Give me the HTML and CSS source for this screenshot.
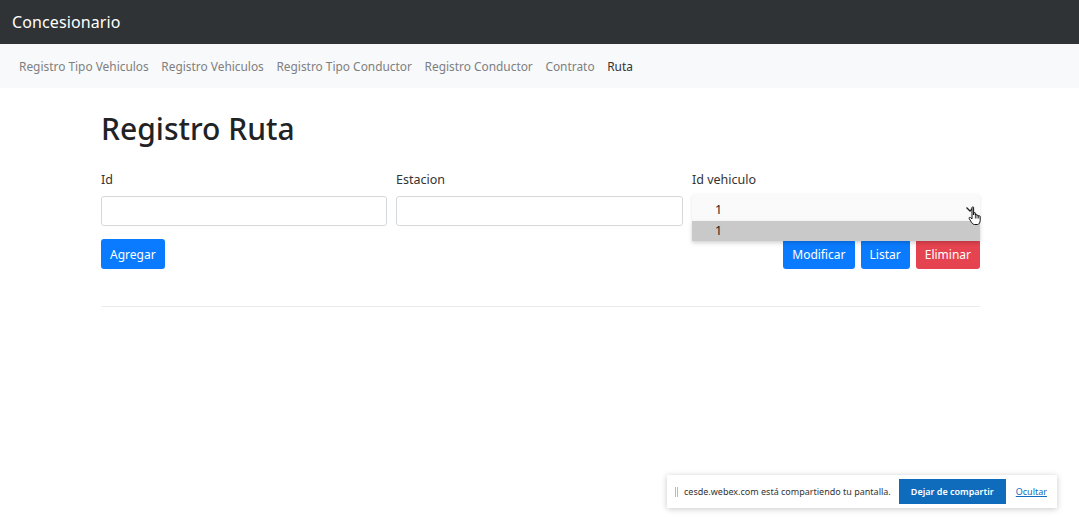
FILE: index.html
```html
<!DOCTYPE html>
<html lang="es">
<head>
<meta charset="utf-8">
<title>Concesionario</title>
<link rel="stylesheet" href="styles.css">
</head>
<body>
<header class="topbar"><span class="brand">Concesionario</span></header>
<nav class="subnav">
  <a class="navlink">Registro Tipo Vehiculos</a>
  <a class="navlink">Registro Vehiculos</a>
  <a class="navlink">Registro Tipo Conductor</a>
  <a class="navlink">Registro Conductor</a>
  <a class="navlink">Contrato</a>
  <a class="navlink active">Ruta</a>
</nav>
<main class="container">
  <h1 class="title">Registro Ruta</h1>
  <div class="fields">
    <div class="field">
      <label class="label">Id</label>
      <div class="input"></div>
    </div>
    <div class="field">
      <label class="label">Estacion</label>
      <div class="input"></div>
    </div>
    <div class="field">
      <label class="label">Id vehiculo</label>
      <div class="select-wrap">
        <div class="select">
          <span class="select-value">1</span>
          <svg class="chevron" width="10" height="7" viewBox="0 0 10 7"><path d="M1.5 1.5 L5 5 L8.5 1.5" fill="none" stroke="#222" stroke-width="1.3"/></svg>
        </div>
        <div class="options"><div class="option">1</div></div>
        <svg class="cursor" width="14" height="20" viewBox="0 0 14 20"><path d="M4 1.5 C4 0.6 5.6 0.6 5.6 1.5 L5.6 9 L5.8 7.2 C5.8 6.3 7.4 6.3 7.4 7.2 L7.4 9 C7.4 8.1 9 8.1 9 9 L9 9.8 C9 9 10.6 9 10.6 9.9 L10.6 10.4 C10.6 9.6 12.2 9.6 12.2 10.5 L12.2 14.5 C12.2 16.5 11 18.5 9.5 18.5 L6.5 18.5 C5 18.5 4.2 17.3 3.2 15.8 L1.2 12.6 C0.6 11.7 1.8 10.8 2.6 11.6 L4 13 Z" fill="#fff" stroke="#111" stroke-width="1" stroke-linejoin="round"/><path d="M7.4 9 L7.4 12.5 M9 9.8 L9 12.5 M10.6 10.4 L10.6 12.5" stroke="#111" stroke-width="0.8"/></svg>
      </div>
    </div>
  </div>
  <div class="actions">
    <button class="btn btn-primary">Agregar</button>
    <div class="actions-right">
      <button class="btn btn-primary">Modificar</button>
      <button class="btn btn-primary">Listar</button>
      <button class="btn btn-danger">Eliminar</button>
    </div>
  </div>
  <hr class="divider">
</main>
<div class="share-bar">
  <span class="grip"></span>
  <span class="share-text">cesde.webex.com está compartiendo tu pantalla.</span>
  <button class="share-btn">Dejar de compartir</button>
  <a class="share-link">Ocultar</a>
</div>
</body>
</html>
```
FILE: styles.css
```css
* { box-sizing: border-box; }
html, body { margin: 0; padding: 0; }
body {
  font-family: "Noto Sans", "Open Sans", sans-serif;
  color: #212529;
  background: #fff;
  width: 1079px;
  height: 517px;
  overflow: hidden;
  position: relative;
}
.topbar {
  height: 44px;
  background: #303335;
  display: flex;
  align-items: center;
  padding-left: 12px;
}
.brand {
  color: #fff;
  font-size: 16px;
  letter-spacing: 0.1px;
}
.subnav {
  height: 44px;
  background: #f8f9fa;
  display: flex;
  align-items: center;
  padding-left: 19px;
  gap: 12.6px;
}
.navlink {
  font-size: 11.9px;
  color: #7d7f81;
}
.navlink.active { color: #333; }
.container {
  width: 879px;
  margin-left: 101px;
  padding-top: 21px;
}
.title {
  margin: 0;
  font-size: 30px;
  font-weight: 500;
  line-height: 40px;
  color: #1f2326;
}
.fields {
  display: grid;
  grid-template-columns: 286px 287px 288px;
  column-gap: 9px;
  margin-top: 22px;
}
.label {
  display: block;
  font-size: 12.5px;
  line-height: 18px;
  margin-bottom: 7px;
  color: #333;
}
.input {
  height: 30px;
  border: 1px solid #d6d9dc;
  border-radius: 3px;
  background: #fff;
}
.select-wrap { position: relative; }
.select {
  height: 29px;
  margin-top: -2px;
  border-radius: 3px;
  background: #fafafa;
  box-shadow: 0 1px 3px rgba(0,0,0,0.12);
  display: flex;
  align-items: center;
  justify-content: space-between;
  padding: 2px 5px 0 23px;
  font-size: 12.5px;
}
.options {
  position: absolute;
  left: 0;
  right: 0;
  top: 27px;
  background: #c9c9c9;
  box-shadow: 0 2px 4px rgba(0,0,0,0.18);
  z-index: 2;
}
.option {
  height: 20px;
  line-height: 20px;
  padding-left: 23px;
  font-size: 12.5px;
  color: #222;
}
.cursor {
  position: absolute;
  right: -2px;
  top: 12px;
  z-index: 3;
}
.actions {
  display: flex;
  justify-content: space-between;
  margin-top: 13px;
}
.actions-right { display: flex; gap: 6px; }
.btn {
  height: 30px;
  border: none;
  border-radius: 3px;
  color: #fff;
  font-family: inherit;
  font-size: 12px;
  padding: 0 9px;
}
.btn-primary { background: #0a7bff; }
.btn-danger { background: #e5434f; }
.divider {
  margin: 37px 0 0;
  border: none;
  border-top: 1px solid #ececee;
}
.share-bar {
  position: absolute;
  left: 667px;
  top: 475px;
  width: 390px;
  height: 33px;
  background: #fff;
  box-shadow: 0 1px 6px rgba(0,0,0,0.22);
  display: flex;
  align-items: center;
  padding-left: 8px;
}
.grip {
  width: 3px;
  height: 10px;
  border-left: 1px solid #bbb;
  border-right: 1px solid #bbb;
  margin-right: 6px;
}
.share-text {
  font-size: 9px;
  color: #333;
  white-space: nowrap;
}
.share-btn {
  margin-left: 8px;
  height: 25px;
  width: 107px;
  border: none;
  background: #0f6cbd;
  color: #fff;
  font-family: inherit;
  font-size: 9px;
  font-weight: 600;
  padding: 0;
}
.share-link {
  margin-left: 10px;
  font-size: 9px;
  color: #0f6cbd;
  text-decoration: underline;
}
```
